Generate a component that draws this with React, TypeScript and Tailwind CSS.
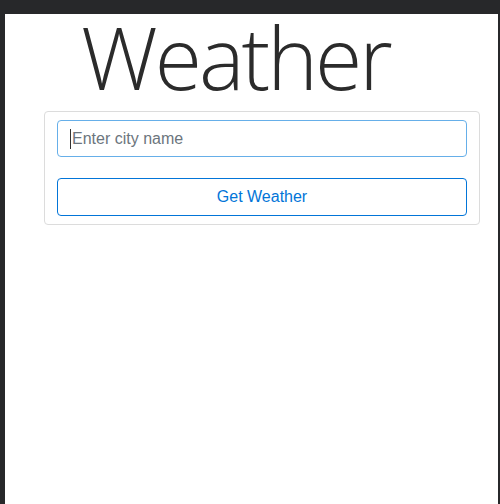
export default function App() {
  return (
    <div className="w-full h-[504px] bg-[#27282a] pt-[10px] pl-[5px] pr-[2px]">
      <div className="h-full bg-white">
        <h1 className="ml-[76px] mt-[4px] text-[86px] leading-[86px] font-light text-[#2b2b2b] tracking-[-3px] font-['Open_Sans',sans-serif]">
          Weather
        </h1>
        <div className="ml-[39px] w-[436px] mt-[11px] border border-[#dcdcdc] rounded-[4px] px-[12px] pt-[8px] pb-[8px] font-['Liberation_Sans',Arial,sans-serif]">
          <div className="h-[37px] border border-[#66afe9] rounded-[4px] flex items-center pl-[12px] text-[16px] text-[#6c757d]">
            <span className="w-px h-[20px] bg-[#333] mr-[1px]" />
            Enter city name
          </div>
          <button className="mt-[21px] w-full h-[38px] border border-[#0275d8] rounded-[4px] text-[16px] text-[#0275d8] bg-white">
            Get Weather
          </button>
        </div>
      </div>
    </div>
  );
}
